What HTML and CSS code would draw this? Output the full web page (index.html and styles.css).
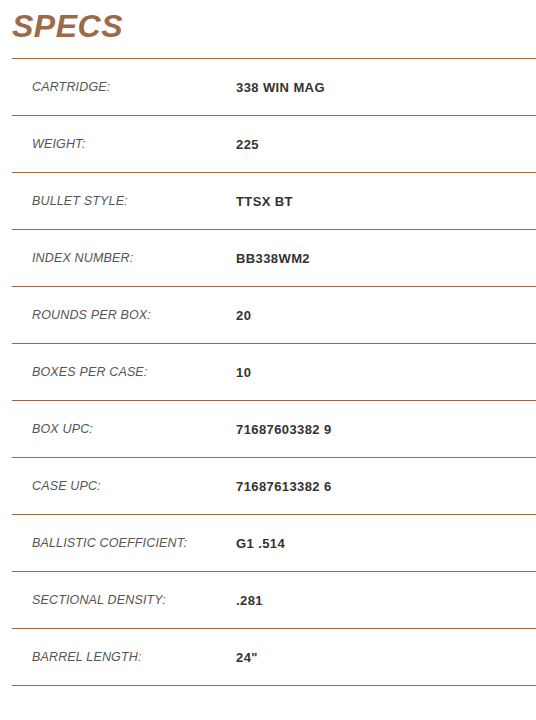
FILE: index.html
```html
<!DOCTYPE html>
<html>
<head>
<meta charset="utf-8">
<link rel="stylesheet" href="styles.css">
</head>
<body>
<div class="specs">
  <h1 class="title">SPECS</h1>
  <div class="table">
    <div class="row"><span class="label">CARTRIDGE:</span><span class="value">338 WIN MAG</span></div>
    <div class="row"><span class="label">WEIGHT:</span><span class="value">225</span></div>
    <div class="row"><span class="label">BULLET STYLE:</span><span class="value">TTSX BT</span></div>
    <div class="row"><span class="label">INDEX NUMBER:</span><span class="value">BB338WM2</span></div>
    <div class="row"><span class="label">ROUNDS PER BOX:</span><span class="value">20</span></div>
    <div class="row"><span class="label">BOXES PER CASE:</span><span class="value">10</span></div>
    <div class="row"><span class="label">BOX UPC:</span><span class="value">71687603382 9</span></div>
    <div class="row"><span class="label">CASE UPC:</span><span class="value">71687613382 6</span></div>
    <div class="row"><span class="label">BALLISTIC COEFFICIENT:</span><span class="value">G1 .514</span></div>
    <div class="row"><span class="label">SECTIONAL DENSITY:</span><span class="value">.281</span></div>
    <div class="row"><span class="label">BARREL LENGTH:</span><span class="value">24"</span></div>
  </div>
</div>
</body>
</html>
```
FILE: styles.css
```css
html, body {
  margin: 0;
  padding: 0;
  background: #ffffff;
}
.specs {
  padding-left: 12px;
  font-family: "Liberation Sans", Arial, sans-serif;
}
.title {
  margin: 0 0 12px 0;
  padding-top: 6px;
  font-size: 32px;
  line-height: 40px;
  font-weight: bold;
  font-style: italic;
  color: #9b6a4b;
  letter-spacing: 0.5px;
}
.table {
  border-top: 1px solid #9b6a4b;
}
.row {
  display: grid;
  grid-template-columns: 204px 1fr;
  align-items: center;
  height: 56px;
  padding-left: 20px;
  border-bottom: 1px solid #9b6a4b;
}
.label {
  font-style: italic;
  font-size: 12.5px;
  letter-spacing: 0.15px;
  color: #555555;
}
.value {
  font-weight: bold;
  font-size: 13px;
  letter-spacing: 0.4px;
  color: #333333;
}
```
